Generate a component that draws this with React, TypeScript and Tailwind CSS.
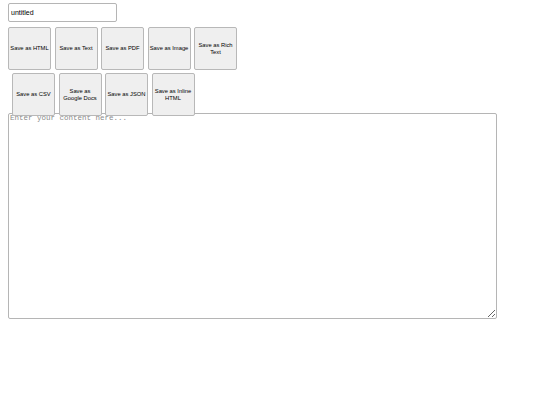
import React from "react";

const row1 = ["Save as HTML", "Save as Text", "Save as PDF", "Save as Image", "Save as Rich Text"];
const row2 = ["Save as CSV", "Save as Google Docs", "Save as JSON", "Save as Inline HTML"];

function Btn({ label }: { label: string }) {
  return (
    <button className="relative z-10 flex h-[43px] w-[43px] shrink-0 items-center justify-center rounded-[2px] border border-[#b8b8b8] bg-[#efefef] px-0 text-center text-[5.8px] leading-[7px] font-normal text-black [font-family:'Liberation_Sans',Arial,sans-serif]">
      {label}
    </button>
  );
}

export default function App() {
  return (
    <div className="h-[405px] w-[540px] bg-white [font-family:'Liberation_Sans',Arial,sans-serif]">
      <div className="pl-[8px] pt-[3px]">
        <input
          defaultValue="untitled"
          className="block h-[19px] w-[109px] rounded-[2px] border border-[#b5b5b5] bg-white px-[2px] text-[7px] text-black outline-none [font-family:'Liberation_Sans',Arial,sans-serif]"
        />
      </div>
      <div className="mt-[5px] flex gap-[3.5px] pl-[8px]">
        {row1.map((l) => (
          <Btn key={l} label={l} />
        ))}
      </div>
      <div className="mt-[3px] flex gap-[3.5px] pl-[12px]">
        {row2.map((l) => (
          <Btn key={l} label={l} />
        ))}
      </div>
      <div className="-mt-[3px] pl-[8px]">
        <textarea
          placeholder="Enter your content here..."
          className="block h-[206px] w-[489px] rounded-[2px] border border-[#b5b5b5] bg-white px-[1px] py-0 text-[7.5px] leading-[9px] text-black outline-none placeholder:text-[#8a8a8a] [font-family:'Liberation_Mono','Courier_New',monospace]"
        />
      </div>
    </div>
  );
}
